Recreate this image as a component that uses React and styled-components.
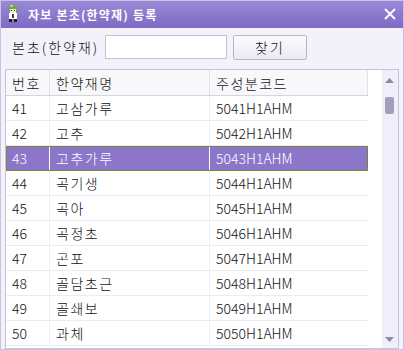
import React from 'react';
import styled, { createGlobalStyle } from 'styled-components';

const Global = createGlobalStyle`
  html, body { margin: 0; padding: 0; }
  body {
    font-family: "Noto Sans CJK KR", "Liberation Sans", sans-serif;
    background: #f3f1fa;
  }
`;

const Window = styled.div`
  width: 404px;
  height: 350px;
  display: flex;
  flex-direction: column;
  background: #f3f1fa;
  border: 1px solid #c9c3e3;
  box-sizing: border-box;
  overflow: hidden;
`;

const TitleBar = styled.div`
  height: 28px;
  flex: none;
  display: flex;
  align-items: center;
  padding: 0 6px 0 6px;
  background: linear-gradient(#9a8ad8, #7e6ac4);
  color: #fff;
  margin: -1px -1px 0 -1px;
`;

const Title = styled.div`
  flex: 1;
  margin-left: 8px;
  font-size: 12px;
  font-weight: 700;
  letter-spacing: 1.2px;
`;

const Close = styled.div`
  width: 16px;
  height: 16px;
  display: flex;
  align-items: center;
  justify-content: center;
`;

const SearchRow = styled.div`
  height: 38px;
  flex: none;
  display: flex;
  align-items: center;
  padding: 0 0 0 11px;
  font-size: 14px;
  font-weight: 300;
  color: #111;
`;

const Label = styled.span`
  width: 93px;
  letter-spacing: 2px;
`;

const Input = styled.input`
  width: 122px;
  height: 24px;
  box-sizing: border-box;
  border: 1px solid #c6c3cf;
  background: #fff;
  outline: none;
`;

const Button = styled.button`
  margin-left: 6px;
  width: 74px;
  height: 25px;
  box-sizing: border-box;
  border: 1px solid #b9b6c6;
  border-radius: 2px;
  background: linear-gradient(#fbfbfd, #eceaf2);
  font-family: inherit;
  font-size: 14px;
  font-weight: 300;
  letter-spacing: 2px;
  color: #111;
  padding: 0;
`;

const Grid = styled.div`
  margin: 3px 4px 0 4px;
  height: 278px;
  border: 1px solid #c8c4d8;
  background: #fff;
  display: flex;
  font-size: 14px;
  font-weight: 300;
  color: #111;
`;

const Table = styled.div`
  width: 362px;
  display: flex;
  flex-direction: column;
`;

const Row = styled.div`
  display: grid;
  grid-template-columns: 44px 160px 158px;
  box-sizing: border-box;
  border-bottom: 1px solid ${p => (p.$head ? '#d6d3e2' : '#ecebf2')};
  background: ${p => (p.$sel ? '#8b76c9' : p.$head ? '#f8f8fb' : '#fff')};
  color: ${p => (p.$sel ? '#fff' : '#111')};
  outline: ${p => (p.$sel ? '1px solid #78883a' : 'none')};
  outline-offset: -1px;
  height: ${p => (p.$head ? '26px' : '25px')};
`;

const Cell = styled.div`
  display: flex;
  align-items: center;
  padding-left: 6px;
  letter-spacing: ${p => (p.$ko ? '1.5px' : '0')};
  border-right: 1px solid ${p => (p.$sel ? '#ffffff' : p.$head ? '#e2e0ea' : '#efeef4')};
  white-space: nowrap;
  &:last-child { border-right: ${p => (p.$head ? '1px solid #e2e0ea' : 'none')}; }
`;

const Gap = styled.div`
  width: 14px;
`;

const Scroll = styled.div`
  width: 17px;
  background: #f0eef8;
  display: flex;
  flex-direction: column;
  align-items: center;
  padding: 8px 0 6px;
  box-sizing: border-box;
`;

const Thumb = styled.div`
  width: 9px;
  height: 17px;
  margin-top: 14px;
  border-radius: 2px;
  background: #a39fbb;
`;

const Spacer = styled.div`
  flex: 1;
`;

const rows = [
  ['41', '고삼가루'],
  ['42', '고추'],
  ['43', '고추가루'],
  ['44', '곡기생'],
  ['45', '곡아'],
  ['46', '곡정초'],
  ['47', '곤포'],
  ['48', '골담초근'],
  ['49', '골쇄보'],
  ['50', '과체'],
];

const Icon = () => (
  <svg width="14" height="18" viewBox="0 0 14 18">
    <rect x="3" y="1" width="8" height="6" fill="#6aa838" />
    <rect x="4" y="0" width="3" height="2" fill="#a8e070" />
    <rect x="4" y="4" width="6" height="4" fill="#f0e8c8" />
    <rect x="5" y="5" width="1" height="1" fill="#222" />
    <rect x="8" y="5" width="1" height="1" fill="#222" />
    <rect x="3" y="8" width="8" height="6" fill="#ffffff" />
    <rect x="6" y="9" width="2" height="4" fill="#3a3a3a" />
    <rect x="3" y="14" width="3" height="3" fill="#222" />
    <rect x="8" y="14" width="3" height="3" fill="#222" />
  </svg>
);

const App = () => (
  <>
    <Global />
    <Window>
      <TitleBar>
        <Icon />
        <Title>자보 본초(한약재) 등록</Title>
        <Close>
          <svg width="12" height="12" viewBox="0 0 12 12">
            <path d="M1 1 L11 11 M11 1 L1 11" stroke="#fff" strokeWidth="1.8" />
          </svg>
        </Close>
      </TitleBar>
      <SearchRow>
        <Label>본초(한약재)</Label>
        <Input />
        <Button>찾기</Button>
      </SearchRow>
      <Grid>
        <Table>
          <Row $head>
            <Cell $head $ko>번호</Cell>
            <Cell $head $ko>한약재명</Cell>
            <Cell $head $ko>주성분코드</Cell>
          </Row>
          {rows.map(([n, name]) => {
            const sel = n === '43';
            return (
              <Row key={n} $sel={sel}>
                <Cell $sel={sel}>{n}</Cell>
                <Cell $sel={sel} $ko>{name}</Cell>
                <Cell $sel={sel}>{`50${n}H1AHM`}</Cell>
              </Row>
            );
          })}
        </Table>
        <Gap />
        <Scroll>
          <svg width="9" height="5" viewBox="0 0 9 5">
            <path d="M0 5 L4.5 0 L9 5 Z" fill="#8e8aa8" />
          </svg>
          <Thumb />
          <Spacer />
          <svg width="9" height="5" viewBox="0 0 9 5">
            <path d="M0 0 L4.5 5 L9 0 Z" fill="#8e8aa8" />
          </svg>
        </Scroll>
      </Grid>
    </Window>
  </>
);

export default App;
